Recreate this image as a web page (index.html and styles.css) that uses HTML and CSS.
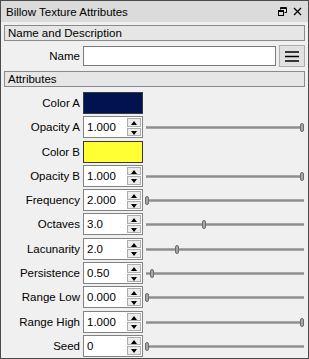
FILE: index.html
```html
<!doctype html>
<html lang="en">
    <head>
        <meta charset="UTF-8" />
        <title>Billow Texture Attributes</title>
        <link rel="stylesheet" href="styles.css">
    </head>
    <body>
        <div class="panel">
            <div class="titlebar">
                <span class="title">Billow Texture Attributes</span>
                <span class="tb-icons">
                    <svg width="9" height="9" viewBox="0 0 9 9">
                        <path d="M2.5 0.5h6v5h-2" fill="none" stroke="#000" />
                        <path d="M2.5 0.5v2" fill="none" stroke="#000" />
                        <rect x="0.5" y="3.5" width="5" height="5" fill="none" stroke="#000" />
                        <path d="M0.5 4.5h5M2.5 1.5h6" stroke="#000" />
                    </svg>
                    <svg width="9" height="9" viewBox="0 0 9 9">
                        <path d="M1 1L8 8M8 1L1 8" stroke="#000" stroke-width="1.3" />
                    </svg>
                </span>
            </div>

            <div class="content">
                <div class="section">Name and Description</div>
                <div class="form name-form">
                    <label>Name</label>
                    <div class="name-field">
                        <input type="text" class="text-input" />
                        <button class="menu-btn">
                            <svg width="14" height="11" viewBox="0 0 14 11">
                                <path d="M0 1h14M0 5.5h14M0 10h14" stroke="#000" stroke-width="1.7" />
                            </svg>
                        </button>
                    </div>
                </div>

                <div class="section">Attributes</div>
                <div class="form attr-form" id="attrs"></div>
            </div>
        </div>

        <script>
            // attribute rows: colour swatches and spin boxes with sliders
            const attrs = [
                { label: "Color A", color: "#00124f" },
                { label: "Opacity A", value: "1.000", pos: 100 },
                { label: "Color B", color: "#ffff33" },
                { label: "Opacity B", value: "1.000", pos: 100 },
                { label: "Frequency", value: "2.000", pos: 0 },
                { label: "Octaves", value: "3.0", pos: 37 },
                { label: "Lacunarity", value: "2.0", pos: 20 },
                { label: "Persistence", value: "0.50", pos: 4.5 },
                { label: "Range Low", value: "0.000", pos: 0 },
                { label: "Range High", value: "1.000", pos: 100 },
                { label: "Seed", value: "0", pos: 0 },
            ];

            const form = document.getElementById("attrs");
            attrs.forEach((a) => {
                const label = document.createElement("label");
                label.textContent = a.label;
                form.appendChild(label);

                const field = document.createElement("div");
                field.className = "field";
                if (a.color) {
                    field.innerHTML = `<div class="swatch" style="background:${a.color}"></div>`;
                } else {
                    field.innerHTML = `
                        <div class="spin">
                            <span class="spin-value">${a.value}</span>
                            <span class="spin-btns">
                                <span class="spin-btn up"></span>
                                <span class="spin-btn down"></span>
                            </span>
                        </div>
                        <div class="slider">
                            <div class="groove"></div>
                            <div class="handle" style="left:${a.pos}%"></div>
                        </div>`;
                }
                form.appendChild(field);
            });
        </script>
    </body>
</html>
```

FILE: styles.css
```css
body {
    margin: 0;
    font-family: "Liberation Sans", Arial, sans-serif;
    font-size: 11.5px;
    color: #000;
}
.panel {
    width: 309px;
    height: 359px;
    box-sizing: border-box;
    border: 1px solid #4a4a4a;
    background-color: #f0f0f0;
}
.titlebar {
    height: 21px;
    background-color: #dbdbdb;
    display: flex;
    align-items: center;
    justify-content: space-between;
    padding: 0 6px 0 5px;
}
.tb-icons {
    display: flex;
    gap: 6px;
    align-items: center;
}
.tb-icons svg {
    display: block;
}
.content {
    padding: 3px 3px 0 3px;
}
.section {
    height: 16px;
    box-sizing: border-box;
    border: 1px solid #8a8a8a;
    background-color: #e6e6e6;
    padding-left: 3px;
    line-height: 14px;
}
.form {
    display: grid;
    grid-template-columns: 76px 1fr;
    column-gap: 3px;
    align-items: center;
}
.form label {
    text-align: right;
}
.name-form {
    margin: 4px 0 4px 0;
}
.name-field {
    display: flex;
    align-items: center;
    gap: 3px;
}
.text-input {
    flex: 1;
    height: 20px;
    box-sizing: border-box;
    border: 1px solid #7a7a7a;
    background: #fff;
    margin: 0;
}
.menu-btn {
    width: 26px;
    height: 22px;
    box-sizing: border-box;
    border: 1px solid #adadad;
    background-color: #e1e1e1;
    display: flex;
    align-items: center;
    justify-content: center;
    padding: 0;
}
.attr-form {
    margin-top: 5px;
    row-gap: 2.3px;
}
.field {
    display: flex;
    align-items: center;
    height: 22px;
}
.swatch {
    width: 60px;
    height: 22px;
    box-sizing: border-box;
    border: 1px solid #3a3a3a;
}
.spin {
    width: 60px;
    height: 22px;
    box-sizing: border-box;
    border: 1px solid #828282;
    background: #fff;
    display: flex;
    align-items: center;
    justify-content: space-between;
    padding: 1px;
}
.spin-value {
    padding-left: 2px;
}
.spin-btns {
    display: flex;
    flex-direction: column;
    gap: 1px;
    height: 18px;
}
.spin-btn {
    width: 14px;
    flex: 1;
    box-sizing: border-box;
    border: 1px solid #adadad;
    background-color: #ececec;
    position: relative;
}
.spin-btn::after {
    content: "";
    position: absolute;
    left: 3px;
    top: 2px;
    border-left: 3.5px solid transparent;
    border-right: 3.5px solid transparent;
}
.spin-btn.up::after {
    border-bottom: 4px solid #000;
}
.spin-btn.down::after {
    top: 2px;
    border-top: 4px solid #000;
}
.slider {
    flex: 1;
    margin-left: 3px;
    height: 22px;
    position: relative;
}
.groove {
    position: absolute;
    left: 0;
    right: 1px;
    top: 10px;
    height: 3px;
    box-sizing: border-box;
    background-color: #8e8e8e;
    border-top: 1px solid #a8a8a8;
    border-bottom: 1px solid #a8a8a8;
}
.handle {
    position: absolute;
    top: 7px;
    width: 4px;
    height: 9px;
    margin-left: -1px;
    box-sizing: border-box;
    border: 1px solid #6e6e6e;
    border-radius: 2px;
    background-color: #a6a6a6;
    transform: translateX(-50%);
}
.handle[style="left:0%"] {
    transform: none;
}
.handle[style="left:100%"] {
    transform: translateX(-100%);
}
```
